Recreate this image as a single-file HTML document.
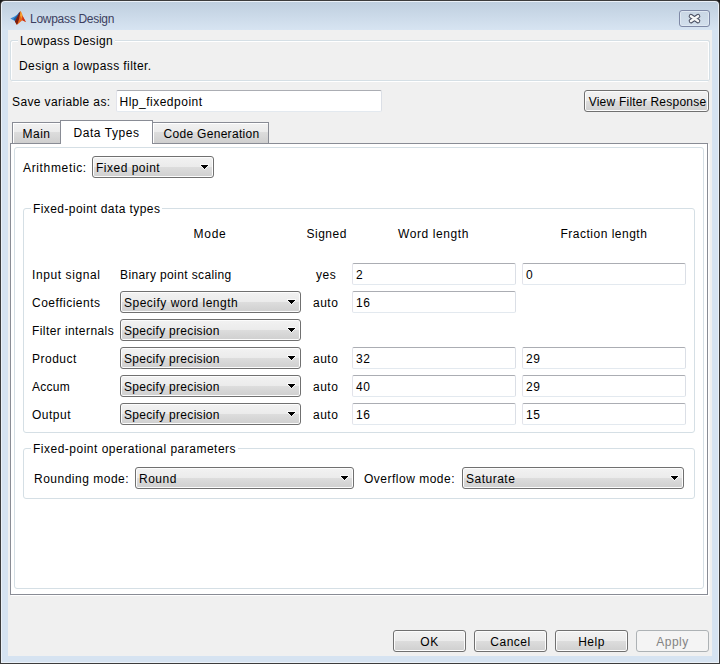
<!DOCTYPE html>
<html><head><meta charset="utf-8">
<style>
*{margin:0;padding:0;box-sizing:border-box}
html,body{width:720px;height:664px;overflow:hidden;background:#1a1a1a}
body{position:relative;font-family:"Liberation Sans",sans-serif;font-size:12px;color:#000}
.a{position:absolute}
.t{position:absolute;white-space:nowrap;line-height:14px;height:14px;letter-spacing:0.5px}
#frame{left:0;top:0;width:720px;height:664px;background:#3c3c3c;border-radius:5px 5px 0 0}
#frame2{left:1px;top:1px;width:718px;height:662px;background:#ebf1f8;border-radius:4px 4px 0 0}
#frame3{left:2px;top:2px;width:716px;height:660px;background:#d6e3f1;border-radius:3px 3px 0 0}
#titlebar{left:2px;top:2px;width:716px;height:28px;background:linear-gradient(#bfcfdf,#d7e4f2);border-radius:3px 3px 0 0}
#content{left:8px;top:30px;width:704px;height:626px;background:#f0f0f0}
.grp-e{position:absolute;border:1px solid #d5dfe5;border-radius:2px;box-shadow:1px 1px 0 #fff, inset 1px 1px 0 #fff}
.grp{position:absolute;border:1px solid #d5dfe5;border-radius:3px}
.leg{position:absolute;white-space:nowrap;line-height:14px;height:14px;padding:0 2px;letter-spacing:0.5px}
.btn{position:absolute;border:1px solid #707070;border-radius:3px;background:linear-gradient(#f2f2f2 0%,#ebebeb 50%,#dddddd 50%,#cfcfcf 100%);box-shadow:inset 0 0 0 1px #fcfcfc;text-align:center;line-height:20px;letter-spacing:0.5px;white-space:nowrap}
.dd{position:absolute;border:1px solid #707070;border-radius:3px;background:linear-gradient(#f2f2f2 0%,#ebebeb 50%,#dddddd 50%,#cfcfcf 100%);box-shadow:inset 0 0 0 1px #fcfcfc;white-space:nowrap;letter-spacing:0.5px}
.dd span{position:absolute;left:3px;top:4px;line-height:14px}
.dd i{position:absolute;right:4px;top:7px;width:9px;height:6px}
.dd i svg{display:block}
.tb{position:absolute;background:#fff;border:1px solid #e3e9ef;border-top-color:#abadb3;border-left-color:#e2e3ea;border-right-color:#dbdfe6;border-radius:2px;white-space:nowrap;letter-spacing:0.5px}
.tb span{position:absolute;left:3px;top:4px;line-height:14px}
.tab{position:absolute;border:1px solid #898c95;border-bottom:none;background:linear-gradient(#f2f2f2 0%,#ebebeb 45%,#dddddd 45%,#cfcfcf 100%);box-shadow:inset 1px 1px 0 #fff;text-align:center;letter-spacing:0.5px;white-space:nowrap}
</style></head><body>
<div id="frame" class="a"></div>
<div id="frame2" class="a"></div>
<div id="frame3" class="a"></div>
<div id="titlebar" class="a"></div>
<!-- matlab icon -->
<svg class="a" style="left:8px;top:8px" width="20" height="20" viewBox="0 0 20 20">
 <path d="M2.3 10.6 L6.5 8.6 L9.5 6.5 L11.8 3.6 L9.5 9.5 L7.4 13.2 L5 12 Z" fill="#3a8ad4"/>
 <path d="M5.5 11 L8.5 8 L11.8 3.6 L9.5 9.5 L7.4 13.2 Z" fill="#1f5f9e"/>
 <path d="M7.4 13.2 L12.6 2.9 L15.2 9 L17.9 13.9 L14.3 12.2 L8.8 17 Z" fill="#e8661c"/>
 <path d="M6.8 13.4 L11.4 4.6 L12.4 3.2 L11.2 10.5 L9.6 15.8 L8.6 16.6 Z" fill="#7a1e10"/>
 <path d="M12.6 2.9 L14.2 6.5 L13.6 10.8 L12.2 7.5 Z" fill="#f6a534"/>
 <path d="M14.6 8 L17.9 13.9 L14.3 12.2 Z" fill="#cf3217"/>
</svg>
<div class="t" style="left:30px;top:12px;color:#3c4060;letter-spacing:-0.28px">Lowpass Design</div>
<!-- close button -->
<div class="a" style="left:679px;top:10px;width:31px;height:17px;border:1px solid #7f89a6;border-radius:3px;background:linear-gradient(#c9d6e4,#d3dfec);box-shadow:inset 0 0 0 1px #dfe8f2"></div>
<svg class="a" style="left:687px;top:12px" width="15" height="13" viewBox="0 0 15 13">
 <path d="M4 4.2 L11 9 M11 4.2 L4 9" stroke="#4a4f62" stroke-width="4.6" fill="none" stroke-linecap="round"/>
 <path d="M4 4.2 L11 9 M11 4.2 L4 9" stroke="#f6f6f6" stroke-width="2.6" fill="none" stroke-linecap="round"/>
</svg>

<div id="content" class="a"></div>

<!-- top group -->
<div class="a" style="left:11px;top:41px;width:698px;height:41px;border:1px solid #fff;border-radius:2px"></div>
<div class="a" style="left:10px;top:40px;width:700px;height:41px;border:1px solid #d5dfe5;border-radius:2px"></div>
<div class="leg" style="left:18px;top:34px;background:#f0f0f0;letter-spacing:0.35px">Lowpass Design</div>
<div class="t" style="left:19px;top:59px;letter-spacing:0.41px">Design a lowpass filter.</div>

<div class="t" style="left:12px;top:95px;letter-spacing:0.38px">Save variable as:</div>
<div class="tb" style="left:116px;top:90px;width:266px;height:22px"><span style="left:2.5px">Hlp_fixedpoint</span></div>
<div class="btn" style="left:584px;top:90px;width:125px;height:22px;letter-spacing:0.22px;padding-left:2px;line-height:22px">View Filter Response</div>

<!-- tabs -->
<div class="a" style="left:10px;top:143px;width:698px;height:452px;border:1px solid #898c95;background:#fff;box-shadow:1px 1px 0 #fff,2px 1px 0 #f8f8f8"></div>
<div class="tab" style="left:12px;top:122px;width:49px;height:21px;line-height:22px">Main</div>
<div class="tab" style="left:152px;top:122px;width:117px;height:21px;line-height:22px;letter-spacing:0.3px;padding-left:2px">Code Generation</div>
<div class="a" style="left:60px;top:120px;width:93px;height:24px;border:1px solid #898c95;border-bottom:none;background:#fff"></div>
<div class="t" style="left:73.5px;top:126px;letter-spacing:0.55px">Data Types</div>
<div class="grp" style="left:14px;top:147px;width:690px;height:442px"></div>

<div class="t" style="left:23px;top:161px;letter-spacing:0.65px">Arithmetic:</div>
<div class="dd" style="left:92px;top:156px;width:122px;height:22px"><span>Fixed point</span><i><svg width="9" height="6" shape-rendering="crispEdges"><path d="M0 0h9v2h-1v1h-1v1h-1v1h-1v1h-1v-1h-1v-1h-1v-1h-1v-1h-1z" fill="rgba(255,255,255,0.7)"/><path d="M1 1h7v1h-1v1h-1v1h-1v1h-1v-1h-1v-1h-1v-1h-1z" fill="#000"/></svg></i></div>

<!-- group 1 -->
<div class="grp" style="left:23px;top:208px;width:672px;height:225px"></div>
<div class="leg" style="left:31px;top:202px;background:#fff;letter-spacing:0.42px">Fixed-point data types</div>
<div class="t" style="left:193.5px;top:227px;letter-spacing:0.75px">Mode</div>
<div class="t" style="left:306.5px;top:227px">Signed</div>
<div class="t" style="left:398px;top:227px;letter-spacing:0.6px">Word length</div>
<div class="t" style="left:560.5px;top:227px">Fraction length</div>

<div class="t" style="left:32px;top:268px;letter-spacing:0.6px">Input signal</div>
<div class="t" style="left:120px;top:268px;letter-spacing:0.38px">Binary point scaling</div>
<div class="t" style="left:316px;top:268px">yes</div>
<div class="tb" style="left:352px;top:263px;width:164px;height:22px"><span>2</span></div>
<div class="tb" style="left:522px;top:263px;width:164px;height:22px"><span>0</span></div>

<div class="t" style="left:32px;top:296px">Coefficients</div>
<div class="dd" style="left:120px;top:291px;width:181px;height:22px"><span>Specify word length</span><i><svg width="9" height="6" shape-rendering="crispEdges"><path d="M0 0h9v2h-1v1h-1v1h-1v1h-1v1h-1v-1h-1v-1h-1v-1h-1v-1h-1z" fill="rgba(255,255,255,0.7)"/><path d="M1 1h7v1h-1v1h-1v1h-1v1h-1v-1h-1v-1h-1v-1h-1z" fill="#000"/></svg></i></div>
<div class="t" style="left:313px;top:296px">auto</div>
<div class="tb" style="left:352px;top:291px;width:164px;height:22px"><span>16</span></div>

<div class="t" style="left:32px;top:324px;letter-spacing:0.42px">Filter internals</div>
<div class="dd" style="left:120px;top:319px;width:181px;height:22px"><span style="letter-spacing:0.3px">Specify precision</span><i><svg width="9" height="6" shape-rendering="crispEdges"><path d="M0 0h9v2h-1v1h-1v1h-1v1h-1v1h-1v-1h-1v-1h-1v-1h-1v-1h-1z" fill="rgba(255,255,255,0.7)"/><path d="M1 1h7v1h-1v1h-1v1h-1v1h-1v-1h-1v-1h-1v-1h-1z" fill="#000"/></svg></i></div>

<div class="t" style="left:32px;top:352px">Product</div>
<div class="dd" style="left:120px;top:347px;width:181px;height:22px"><span style="letter-spacing:0.3px">Specify precision</span><i><svg width="9" height="6" shape-rendering="crispEdges"><path d="M0 0h9v2h-1v1h-1v1h-1v1h-1v1h-1v-1h-1v-1h-1v-1h-1v-1h-1z" fill="rgba(255,255,255,0.7)"/><path d="M1 1h7v1h-1v1h-1v1h-1v1h-1v-1h-1v-1h-1v-1h-1z" fill="#000"/></svg></i></div>
<div class="t" style="left:313px;top:352px">auto</div>
<div class="tb" style="left:352px;top:347px;width:164px;height:22px"><span>32</span></div>
<div class="tb" style="left:522px;top:347px;width:164px;height:22px"><span>29</span></div>

<div class="t" style="left:32px;top:380px;letter-spacing:0.25px">Accum</div>
<div class="dd" style="left:120px;top:375px;width:181px;height:22px"><span style="letter-spacing:0.3px">Specify precision</span><i><svg width="9" height="6" shape-rendering="crispEdges"><path d="M0 0h9v2h-1v1h-1v1h-1v1h-1v1h-1v-1h-1v-1h-1v-1h-1v-1h-1z" fill="rgba(255,255,255,0.7)"/><path d="M1 1h7v1h-1v1h-1v1h-1v1h-1v-1h-1v-1h-1v-1h-1z" fill="#000"/></svg></i></div>
<div class="t" style="left:313px;top:380px">auto</div>
<div class="tb" style="left:352px;top:375px;width:164px;height:22px"><span>40</span></div>
<div class="tb" style="left:522px;top:375px;width:164px;height:22px"><span>29</span></div>

<div class="t" style="left:32px;top:408px">Output</div>
<div class="dd" style="left:120px;top:403px;width:181px;height:22px"><span style="letter-spacing:0.3px">Specify precision</span><i><svg width="9" height="6" shape-rendering="crispEdges"><path d="M0 0h9v2h-1v1h-1v1h-1v1h-1v1h-1v-1h-1v-1h-1v-1h-1v-1h-1z" fill="rgba(255,255,255,0.7)"/><path d="M1 1h7v1h-1v1h-1v1h-1v1h-1v-1h-1v-1h-1v-1h-1z" fill="#000"/></svg></i></div>
<div class="t" style="left:313px;top:408px">auto</div>
<div class="tb" style="left:352px;top:403px;width:164px;height:22px"><span>16</span></div>
<div class="tb" style="left:522px;top:403px;width:164px;height:22px"><span>15</span></div>

<!-- group 2 -->
<div class="grp" style="left:23px;top:448px;width:672px;height:51px"></div>
<div class="leg" style="left:31px;top:442px;background:#fff">Fixed-point operational parameters</div>
<div class="t" style="left:34px;top:472px">Rounding mode:</div>
<div class="dd" style="left:135px;top:467px;width:219px;height:22px"><span>Round</span><i><svg width="9" height="6" shape-rendering="crispEdges"><path d="M0 0h9v2h-1v1h-1v1h-1v1h-1v1h-1v-1h-1v-1h-1v-1h-1v-1h-1z" fill="rgba(255,255,255,0.7)"/><path d="M1 1h7v1h-1v1h-1v1h-1v1h-1v-1h-1v-1h-1v-1h-1z" fill="#000"/></svg></i></div>
<div class="t" style="left:364px;top:472px">Overflow mode:</div>
<div class="dd" style="left:462px;top:467px;width:222px;height:22px"><span>Saturate</span><i><svg width="9" height="6" shape-rendering="crispEdges"><path d="M0 0h9v2h-1v1h-1v1h-1v1h-1v1h-1v-1h-1v-1h-1v-1h-1v-1h-1z" fill="rgba(255,255,255,0.7)"/><path d="M1 1h7v1h-1v1h-1v1h-1v1h-1v-1h-1v-1h-1v-1h-1z" fill="#000"/></svg></i></div>

<!-- bottom buttons -->
<div class="btn" style="left:393px;top:630px;width:73px;height:22px;line-height:22px">OK</div>
<div class="btn" style="left:474px;top:630px;width:73px;height:22px;line-height:22px">Cancel</div>
<div class="btn" style="left:555px;top:630px;width:73px;height:22px;line-height:22px">Help</div>
<div class="btn" style="left:636px;top:630px;width:73px;height:22px;line-height:22px;border-color:#adb2b5;background:#f4f4f4;color:#838383;box-shadow:none">Apply</div>
</body></html>
